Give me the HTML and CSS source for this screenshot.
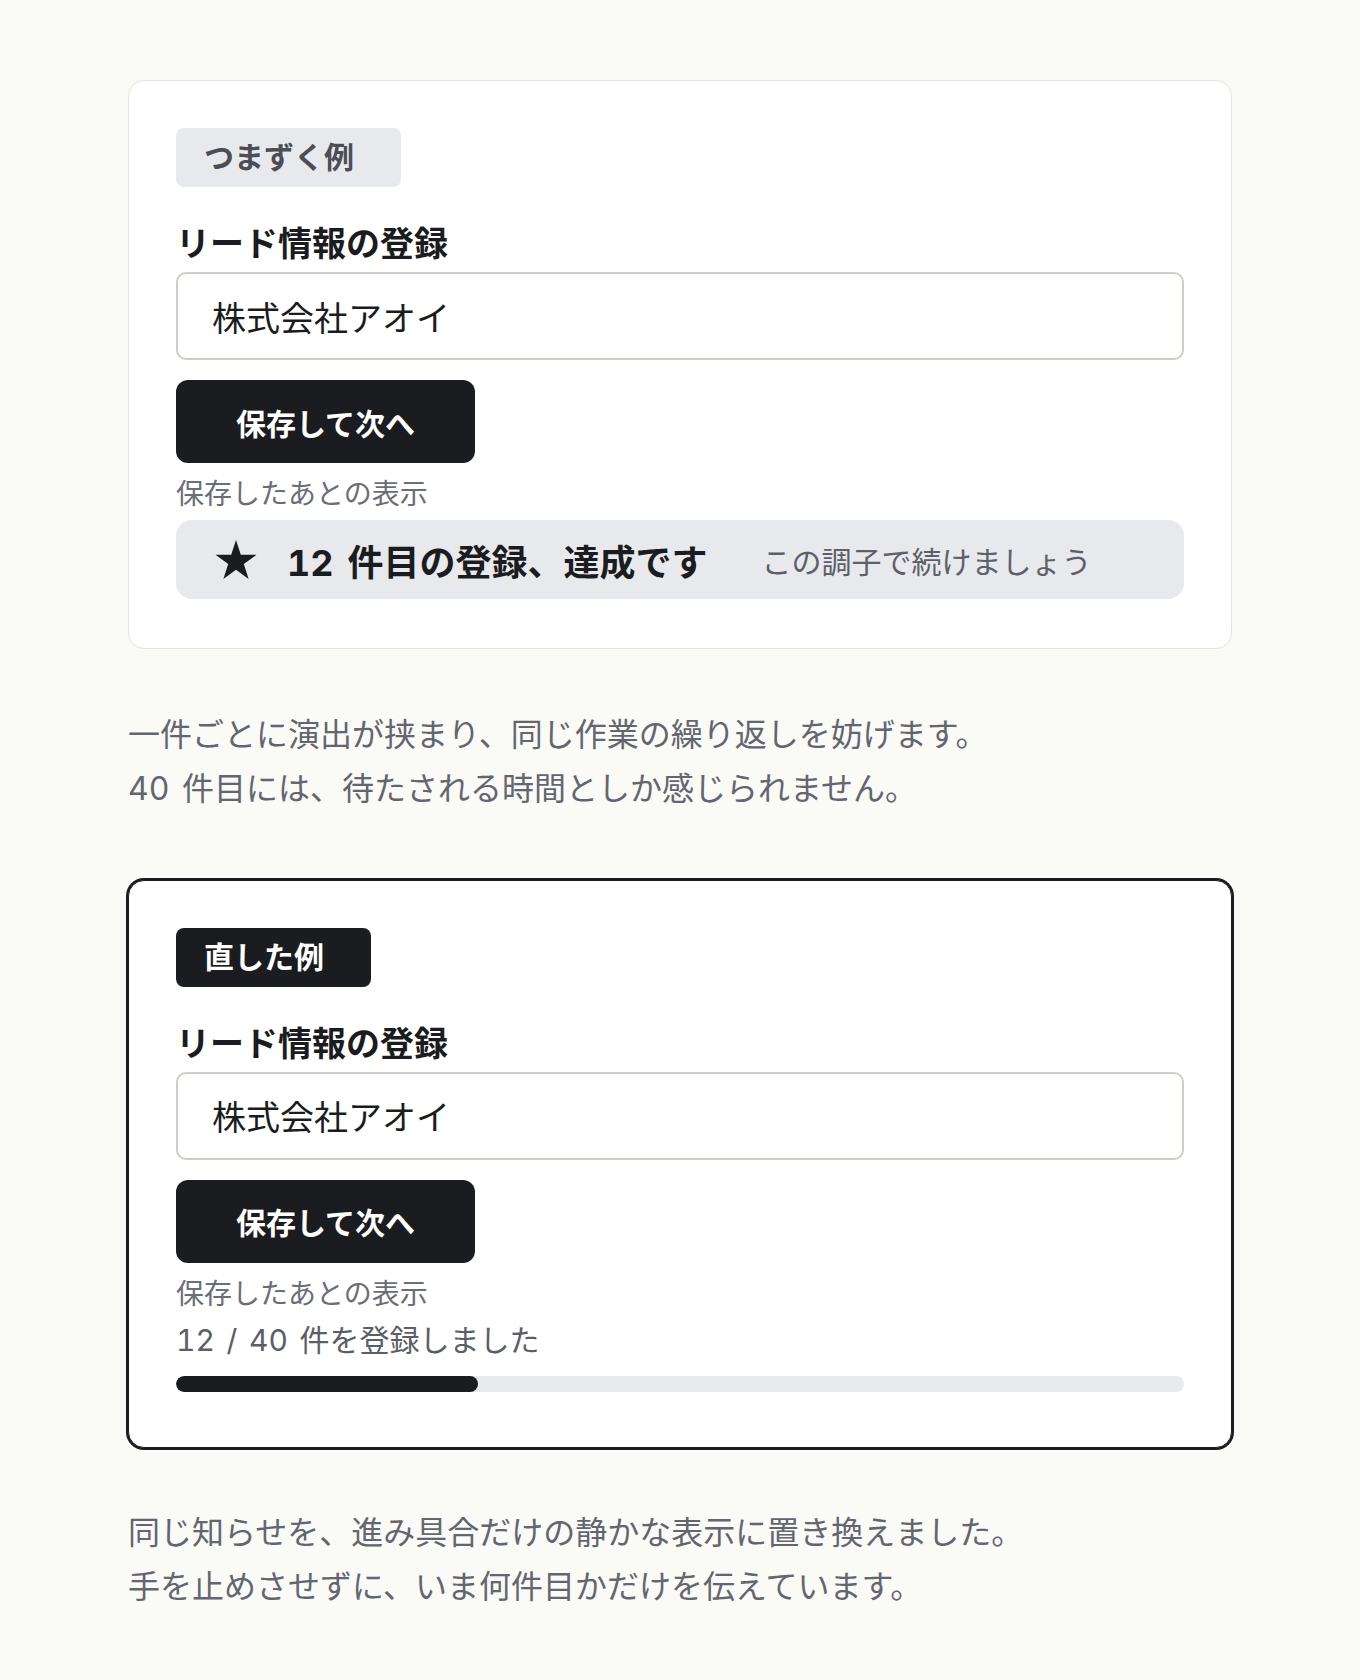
FILE: index.html
```html
<!DOCTYPE html>
<html lang="ja">
 <head>
  <meta charset="utf-8">
  <title>保存後の表示</title>
  <link rel="stylesheet" href="styles.css">
 </head>
 <body>
  <main class="page">

   <!-- before: a celebration after every save -->
   <section class="card">
    <span class="tag">つまずく例</span>
    <h2 class="form-title">リード情報の登録</h2>
    <input class="field" type="text" value="株式会社アオイ" readonly>
    <button class="btn" type="button">保存して次へ</button>
    <p class="caption">保存したあとの表示</p>
    <div class="toast">
     <svg class="toast-star" viewBox="0 0 42 39" aria-hidden="true">
      <polygon points="21,0 25.82,14.87 41.45,14.86 28.8,24.03 33.64,38.89 21,29.7 8.36,38.89 13.2,24.03 0.55,14.86 16.18,14.87"/>
     </svg>
     <strong class="toast-main"><span class="num">12 </span>件目の登録、達成です</strong>
     <span class="toast-sub">この調子で続けましょう</span>
    </div>
   </section>

   <p class="note">一件ごとに演出が挟まり、同じ作業の繰り返しを妨げます。<br><span class="num">40 </span>件目には、待たされる時間としか感じられません。</p>

   <!-- after: a quiet progress line -->
   <section class="card card-good">
    <span class="tag">直した例</span>
    <h2 class="form-title">リード情報の登録</h2>
    <input class="field" type="text" value="株式会社アオイ" readonly>
    <button class="btn" type="button">保存して次へ</button>
    <p class="caption">保存したあとの表示</p>
    <p class="progress-label"><span class="num">12 / 40 </span>件を登録しました</p>
    <div class="progress"><div class="progress-fill" style="width:30%"></div></div>
   </section>

   <p class="note">同じ知らせを、進み具合だけの静かな表示に置き換えました。<br>手を止めさせずに、いま何件目かだけを伝えています。</p>

  </main>
 </body>
</html>
```

FILE: styles.css
```css
html, body {
  margin:0;
}
body {
  background:#fafaf6;
  color:#1b1c20;
  font-family:"Noto Sans CJK JP", sans-serif;
}
.page {
  width:1104px; margin:0 auto; padding:80px 0 68px;
}

/* latin figures sit in Inter, wider than the CJK font's own */
.num {
  font-family:Inter, sans-serif;
  font-variant-numeric:tabular-nums;
  word-spacing:0.12em;
  line-height:1;
}

/* cards */
.card {
  display:flex; flex-direction:column; align-items:flex-start;
  box-sizing:border-box; padding:47px 47px 49px;
  background:#fff; border:1px solid #e4e4dc; border-radius:16px;
}
.card-good {
  margin-top:66px;
  border-color:#1b1c20; box-shadow:0 0 0 2px #1b1c20;
}
.tag {
  padding:0 47px 4px 28px; line-height:55px; border-radius:8px;
  background:#e8e9ec; color:#4b4e55;
  font-size:30px; font-weight:700;
}
.card-good .tag {
  background:#1b1c20; color:#fff;
}
.form-title {
  margin:33px 0 8px;
  font-size:34px; line-height:44px; font-weight:700;
}
.field {
  align-self:stretch; box-sizing:border-box; height:88px; padding:0 34px;
  border:2px solid #cfcec6; border-radius:10px; outline:none;
  background:#fff; color:#1b1c20;
  font:inherit; font-size:34px;
}
.btn {
  margin-top:20px; height:83px; padding:0 60px;
  border:0; border-radius:12px;
  background:#1b1c20; color:#fff;
  font:inherit; font-size:30px; font-weight:700;
}
.caption {
  margin:9px 0 0;
  font-size:28px; line-height:40px; color:#6b6e76;
}

/* celebration banner */
.toast {
  align-self:stretch; display:flex; align-items:center;
  box-sizing:border-box; height:79px; margin-top:8px; padding:0 39px;
  background:#e8e9ec; border-radius:16px;
}
.toast-star {
  width:42px; height:39px; margin-right:30px; fill:#1b1c20;
}
.toast-main {
  font-size:36px; font-weight:700;
}
.toast-sub {
  margin-left:54px;
  font-size:30px; color:#5d6068;
}

/* progress */
.progress-label {
  margin:6px 0 0;
  font-size:30px; line-height:40px; color:#5b5e66;
}
.progress {
  align-self:stretch; height:16px; margin:18px 0 6px;
  background:#e8e9ec; border-radius:8px; overflow:hidden;
}
.progress-fill {
  height:100%; background:#1b1c20; border-radius:8px;
}

.note {
  margin:56px 0 0;
  font-size:32px; line-height:1.7; color:#63666e;
}
.card-good + .note {
  margin-top:55px;
}
```
